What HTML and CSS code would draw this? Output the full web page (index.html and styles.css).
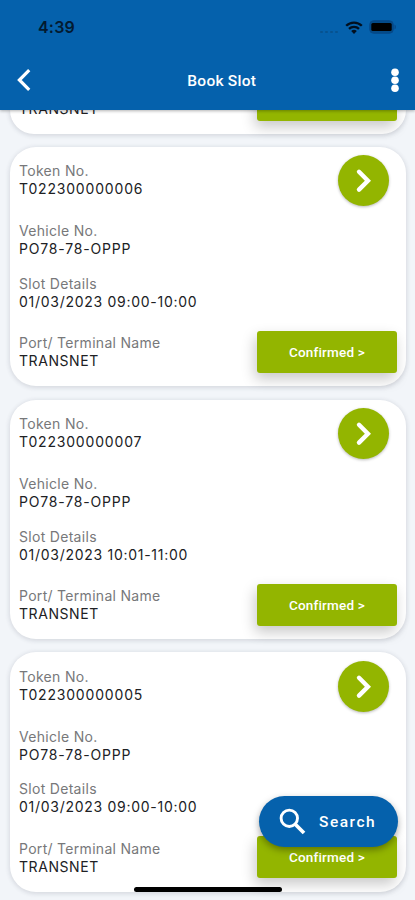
FILE: index.html
```html
<!DOCTYPE html>
<html lang="en">
<head>
<meta charset="utf-8">
<title>Book Slot</title>
<link rel="stylesheet" href="styles.css">
</head>
<body>
<div class="screen">
  <header class="header">
    <div class="status">
      <span class="time">4:39</span>
      <div class="status-icons">
        <span class="signal"><i></i><i></i><i></i><i></i></span>
        <svg class="wifi" width="18" height="13" viewBox="0 0 18 13"><path d="M1.2 4.8a11 11 0 0 1 15.6 0M4 7.9a7.1 7.1 0 0 1 10 0" fill="none" stroke="#02101f" stroke-width="2.3"/><path d="M6.2 10a4 4 0 0 1 5.6 0L9 12.9z" fill="#02101f"/></svg>
        <svg class="battery" width="28" height="14" viewBox="0 0 28 14"><rect x=".7" y=".7" width="23.6" height="12.6" rx="4" fill="#044b88" stroke="#06498a"/><path d="M25.5 4.5v5q1.5-.7 1.5-2.5t-1.5-2.5z" fill="#06498a"/><rect x="2.3" y="3" width="20.4" height="8" rx="1.5" fill="#000"/></svg>
      </div>
    </div>
    <div class="toolbar">
      <svg class="back" width="16" height="24" viewBox="0 0 16 24"><path d="M13.2 2.2 3.4 12l9.8 9.8" fill="none" stroke="#fff" stroke-width="3.2"/></svg>
      <h1 class="title">Book Slot</h1>
      <svg class="more" width="8" height="26" viewBox="0 0 8 26"><g fill="#fff"><circle cx="4" cy="5.3" r="3.8"/><circle cx="4" cy="13.3" r="3.8"/><circle cx="4" cy="21.3" r="3.8"/></g></svg>
    </div>
  </header>
  <main class="list">
    <article class="card card-tail">
      <div class="value">TRANSNET</div>
      <button class="confirm"></button>
    </article>
    <article class="card">
      <div class="details">
        <div class="label">Token No.</div><div class="value token">T022300000006</div>
        <div class="label second">Vehicle No.</div><div class="value token">PO78-78-OPPP</div>
        <div class="label third">Slot Details</div><div class="value slot">01/03/2023 09:00-10:00</div>
        <div class="label fourth">Port/ Terminal Name</div><div class="value">TRANSNET</div>
      </div>
      <div class="actions">
        <button class="open" aria-label="Open"><svg width="51" height="51" viewBox="0 0 51 51"><path d="m21 16.8 8.9 8.9-8.9 8.9" fill="none" stroke="#fff" stroke-width="4.4" stroke-linecap="round"/></svg></button>
        <button class="confirm">Confirmed &gt;</button>
      </div>
    </article>
    <article class="card">
      <div class="details">
        <div class="label">Token No.</div><div class="value token">T022300000007</div>
        <div class="label second">Vehicle No.</div><div class="value token">PO78-78-OPPP</div>
        <div class="label third">Slot Details</div><div class="value slot">01/03/2023 10:01-11:00</div>
        <div class="label fourth">Port/ Terminal Name</div><div class="value">TRANSNET</div>
      </div>
      <div class="actions">
        <button class="open" aria-label="Open"><svg width="51" height="51" viewBox="0 0 51 51"><path d="m21 16.8 8.9 8.9-8.9 8.9" fill="none" stroke="#fff" stroke-width="4.4" stroke-linecap="round"/></svg></button>
        <button class="confirm">Confirmed &gt;</button>
      </div>
    </article>
    <article class="card">
      <div class="details">
        <div class="label">Token No.</div><div class="value token">T022300000005</div>
        <div class="label second">Vehicle No.</div><div class="value token">PO78-78-OPPP</div>
        <div class="label third">Slot Details</div><div class="value slot">01/03/2023 09:00-10:00</div>
        <div class="label fourth">Port/ Terminal Name</div><div class="value">TRANSNET</div>
      </div>
      <div class="actions">
        <button class="open" aria-label="Open"><svg width="51" height="51" viewBox="0 0 51 51"><path d="m21 16.8 8.9 8.9-8.9 8.9" fill="none" stroke="#fff" stroke-width="4.4" stroke-linecap="round"/></svg></button>
        <button class="confirm">Confirmed &gt;</button>
      </div>
    </article>
  </main>
  <button class="search"><svg width="27" height="27" viewBox="0 0 27 27"><g fill="none" stroke="#fff"><circle cx="10.3" cy="10.3" r="8.2" stroke-width="2.9"/><path d="m16 16 9 9" stroke-width="3.7"/></g></svg><span>Search</span></button>
  <div class="home-bar"></div>
</div>
</body>
</html>
```

FILE: styles.css
```css
* { box-sizing: border-box; }
body { margin: 0; font-family: Inter, "Liberation Sans", sans-serif; }
button { border: 0; padding: 0; color: #fff; font-family: Roboto, sans-serif; }
svg { display: block; flex: none; }
.screen { position: relative; width: 415px; height: 900px; overflow: hidden; display: flex; flex-direction: column; background: #f2f5f9; }
.header { position: relative; z-index: 1; flex: none; height: 109.5px; background: #0561ac; box-shadow: 0 1px 3px rgba(0,0,0,.3); }
.status { height: 54px; padding: 0 18px 0 38px; display: flex; align-items: center; justify-content: space-between; }
.time { font-size: 16px; font-weight: 600; letter-spacing: .2px; color: #031a30; }
.status-icons { display: flex; align-items: center; gap: 6px; }
.signal { display: flex; gap: 2px; margin: 9px 1px 0 0; }
.signal i { width: 3px; height: 2px; border-radius: 1px; background: #07528f; }
.toolbar { height: 52px; padding: 0 16px; display: flex; align-items: center; justify-content: space-between; }
.title { margin: 2px 0 0 20.5px; font: 500 15.5px Roboto, sans-serif; letter-spacing: .25px; color: #fff; }
.list { flex: 1; overflow: hidden; min-height: 0; padding: 0 9.5px 0 10px; display: flex; flex-direction: column; gap: 13.3px; }
.card { flex: none; height: 239.4px; display: flex; justify-content: space-between; padding: 15.5px 8.5px 0 9px; border-radius: 26px; background: #fff; box-shadow: 0 1px 4px 1px rgba(50,60,75,.14); }
.card-tail { height: 24.2px; padding-top: 0; padding-bottom: 13px; align-items: flex-end; border-radius: 0 0 26px 26px; }
.card-tail .value { margin-bottom: 3px; }
.label, .value { font-size: 14px; line-height: 18px; white-space: nowrap; }
.label { color: #77787a; letter-spacing: .3px; }
.value { color: #202124; letter-spacing: .57px; }
.token { letter-spacing: .82px; }
.slot { letter-spacing: .72px; }
.second { margin-top: 24px; }
.third { margin-top: 16.5px; }
.fourth { margin-top: 23.5px; }
.actions { display: flex; flex-direction: column; align-items: flex-end; justify-content: space-between; margin-top: -7px; padding-bottom: 13.3px; }
.open { width: 51px; height: 51px; margin-right: 8px; border-radius: 50%; background: #93b500; box-shadow: 0 1px 3px rgba(0,0,0,.28); }
.confirm { flex: none; width: 140px; height: 42px; border-radius: 3px; background: #93b500; box-shadow: -2px 6px 14px rgba(0,0,0,.22); font-size: 13.5px; font-weight: 500; letter-spacing: .2px; }
.search { position: absolute; left: 259px; top: 796px; width: 139px; height: 51px; border-radius: 26px; padding-left: 20px; display: flex; align-items: center; gap: 13px; background: #0561ac; box-shadow: 0 3px 7px rgba(0,0,0,.35); font-size: 15.5px; font-weight: 500; letter-spacing: 1.5px; }
.home-bar { position: absolute; left: 134px; top: 886.5px; width: 148px; height: 5px; border-radius: 3px; background: #000; }
```
